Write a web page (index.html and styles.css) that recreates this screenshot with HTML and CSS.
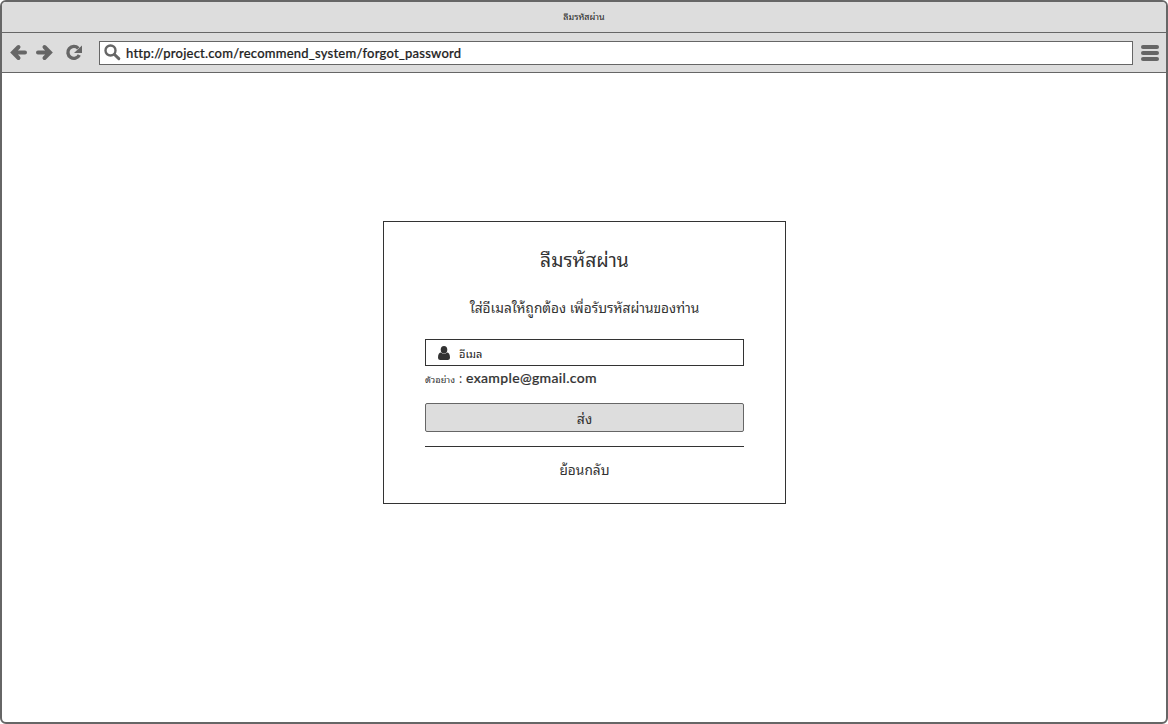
FILE: index.html
```html
<!DOCTYPE html>
<html lang="th">
<head>
<meta charset="utf-8">
<title>ลืมรหัสผ่าน</title>
<link rel="stylesheet" href="styles.css">
</head>
<body>
<div class="browser">
  <header class="titlebar"><span class="title-text">ลืมรหัสผ่าน</span></header>
  <nav class="toolbar">
    <svg class="nav-icons" width="90" height="38" viewBox="0 0 90 38">
      <g fill="none" stroke="#666" stroke-width="4" stroke-linecap="round">
        <path d="M23 18.500H12M16.500 13L11 18.500L16.500 24"/>
        <path d="M36 18.500H47M42.500 13L48 18.500L42.500 24"/>
        <path d="M76.300 14.300A6 6 0 1 0 77.300 21" stroke-width="3.400" stroke-linecap="butt"/>
      </g>
      <path d="M80 11.500V19H72Z" fill="#666"/>
    </svg>
    <div class="address">
      <svg class="search" width="18" height="18" viewBox="0 0 18 18" fill="none" stroke="#666">
        <circle cx="6.500" cy="6.500" r="5" stroke-width="2.400"/>
        <path d="M10.500 10.500L14.800 14.600" stroke-width="3" stroke-linecap="round"/>
      </svg>
      <span class="url">http://project.com/recommend_system/forgot_password</span>
    </div>
    <svg class="menu" width="18" height="18" viewBox="0 0 18 18" fill="#666">
      <rect y="1" width="18" height="4" rx="2"/><rect y="7" width="18" height="4" rx="2"/><rect y="13" width="18" height="4" rx="2"/>
    </svg>
  </nav>
  <main class="page">
    <form class="card">
      <h1 class="heading"><span>ลืมรหัสผ่าน</span></h1>
      <p class="intro"><span>ใส่อีเมลให้ถูกต้อง เพื่อรับรหัสผ่านของท่าน</span></p>
      <div class="field">
        <svg width="12" height="14" viewBox="0 0 12 14" fill="#333"><ellipse cx="6" cy="3.800" rx="3.300" ry="3.800"/><path d="M0 11.500C0 8 1.300 6.500 3 6.500C4.700 8.300 7.300 8.300 9 6.500C10.700 6.500 12 8 12 11.500C12 13.200 11 14 9.800 14H2.200C1 14 0 13.200 0 11.500Z"/></svg>
        <span class="placeholder">อีเมล</span>
      </div>
      <p class="hint"><span class="hint-label">ตัวอย่าง</span><span class="colon">:</span><span class="email">example@gmail.com</span></p>
      <button type="button" class="submit"><span>ส่ง</span></button>
      <a class="back"><span>ย้อนกลับ</span></a>
    </form>
  </main>
</div>
</body>
</html>
```
FILE: styles.css
```css
* { box-sizing: border-box; }
body { margin: 0; background: #fff; color: #333; font-family: "Noto Sans Thai Looped", "Loma", "Garuda", "Waree", "Norasi", "Noto Serif Thai", "Noto Sans Thai", "Liberation Sans", sans-serif; }
.browser { display: flex; flex-direction: column; width: 1168px; height: 724px; border: 2px solid #666; border-radius: 6px; overflow: hidden; background: #fff; }
.titlebar { height: 31px; flex: none; display: flex; align-items: center; justify-content: center; padding-bottom: 2px; background: #ddd; border-bottom: 1px solid #666; font-size: 9px; color: #222; }
.toolbar { height: 40px; flex: none; display: flex; align-items: center; background: #ddd; border-bottom: 1px solid #666; }
.nav-icons { flex: none; margin-right: 7px; }
.address { width: 1034px; height: 24px; display: flex; align-items: center; border: 1px solid #666; background: #fff; padding-left: 4px; }
.search { flex: none; }
.url { margin-left: 4px; font: 500 13px/20px Lato, sans-serif; letter-spacing: 0.22px; color: #222; -webkit-text-stroke: 0.2px #222; white-space: nowrap; }
.menu { margin-left: 8px; flex: none; }
.page { flex: 1; display: flex; justify-content: center; align-items: flex-start; padding-top: 148px; }
.card { width: 403px; height: 283px; margin-right: -1px; border: 1px solid #333; padding: 20px 41px 0; display: flex; flex-direction: column; }
.heading, .intro, .back { display: flex; justify-content: center; align-items: center; margin: 0; font-weight: 400; white-space: nowrap; }
.heading { height: 36px; padding-bottom: 4px; font-size: 19.3px; }
.intro { height: 32px; margin-top: 14px; padding-bottom: 2px; font-size: 13.7px; }
.field { height: 27px; margin-top: 15px; padding-left: 12px; border: 1px solid #333; display: flex; align-items: center; gap: 9px; font-size: 11px; color: #222; }
.hint { height: 24px; margin: 0; display: flex; align-items: center; white-space: nowrap; }
.hint-label { width: 34px; font-size: 9.3px; }
.colon { width: 7px; padding-bottom: 2px; font-size: 12px; }
.email { font: 500 14px/20px Lato, sans-serif; letter-spacing: 0.33px; -webkit-text-stroke: 0.2px #333; }
.submit { height: 29px; margin-top: 13px; padding: 0; border: 1px solid #666; border-radius: 2px; background: #ddd; color: #333; font-family: inherit; font-size: 14px; }
.back { height: 46px; margin-top: 14px; padding-bottom: 2px; border-top: 1px solid #333; font-size: 13.7px; }
```
